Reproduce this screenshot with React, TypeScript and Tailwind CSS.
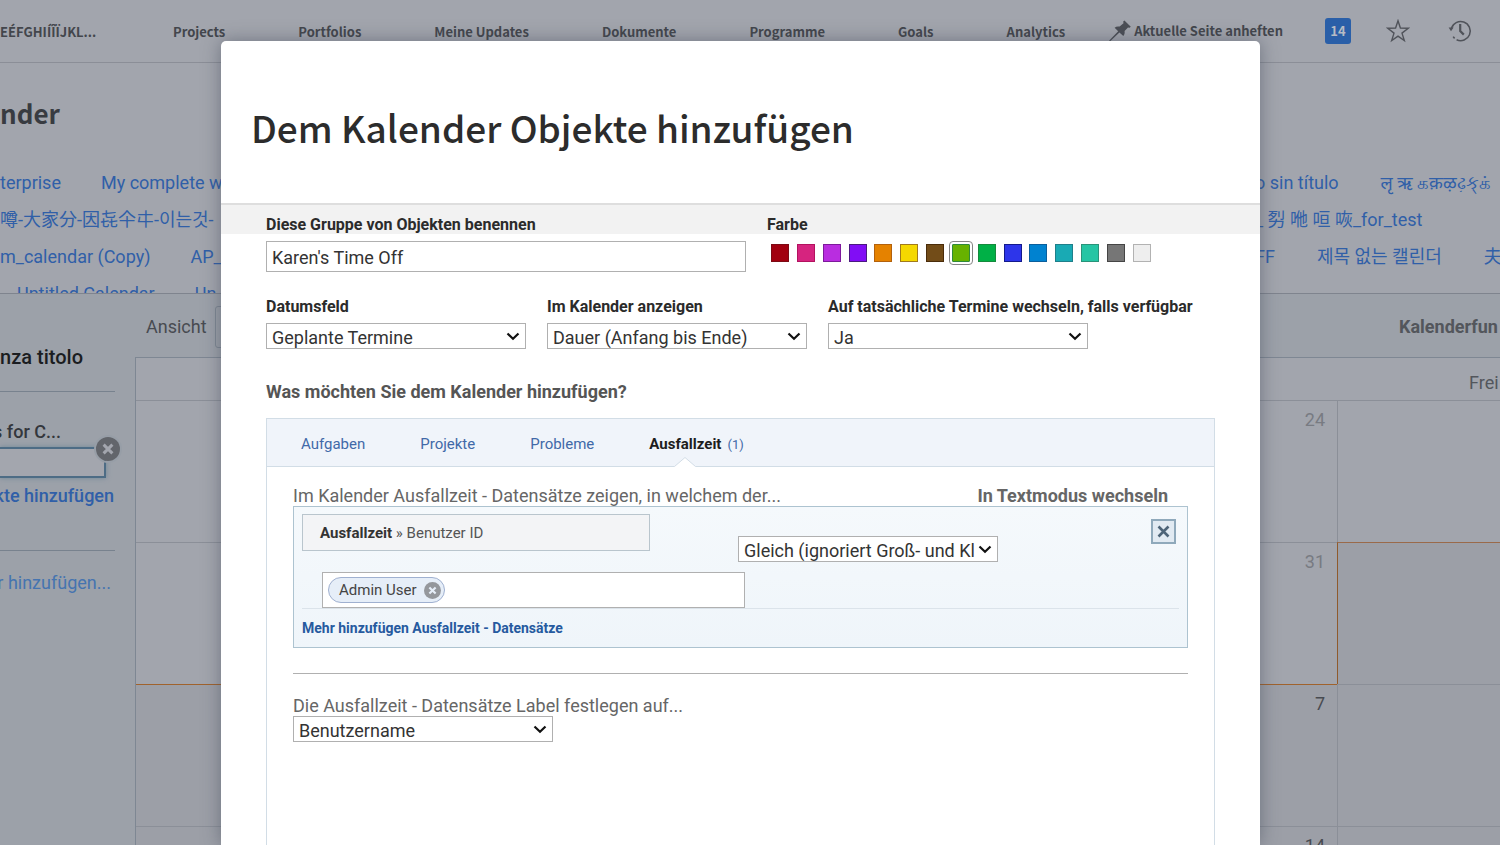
import React from "react";

const HEAD = "font-['Noto_Sans_CJK_JP','Noto_Sans',sans-serif]";

const navItems = [
  "Projects",
  "Portfolios",
  "Meine Updates",
  "Dokumente",
  "Programme",
  "Goals",
  "Analytics",
];

const calendarRows = [
  { left: ["terprise", "My complete w"], right: ["o sin título", "लृ ऋ கक़ऴઢ઼ક્க்"], pull: "" },
  { left: ["噂-大家分-因㐂仐㐄-이는것-"], right: ["_ 劽 咃 咺 咴_for_test"], pull: "" },
  { left: ["m_calendar (Copy)", "AP_"], right: ["FF", "제목 없는 캘린더", "夫"], pull: "" },
  { left: ["Untitled Calendar", "Un"], right: [], pull: "pl-[17px]" },
];

const swatches = [
  { name: "Rot", cls: "bg-[#a1000f] border-[#7c0a14]" },
  { name: "Pink", cls: "bg-[#d6247f] border-[#b3125f]" },
  { name: "Magenta", cls: "bg-[#b92de0] border-[#7d1a9b]" },
  { name: "Violett", cls: "bg-[#810df5] border-[#4b1a80]" },
  { name: "Orange", cls: "bg-[#e58200] border-[#b3610c]" },
  { name: "Gelb", cls: "bg-[#f5d800] border-[#a17a1c]" },
  { name: "Braun", cls: "bg-[#724c18] border-[#4a2c0a]" },
  { name: "Hellgrün", cls: "bg-[#67b200] border-[#2f8a3a]" },
  { name: "Grün", cls: "bg-[#00b046] border-[#158a3c]" },
  { name: "Blau", cls: "bg-[#2d35ea] border-[#141a8c]" },
  { name: "Azurblau", cls: "bg-[#0082d0] border-[#0b5f9c]" },
  { name: "Petrol", cls: "bg-[#19aab4] border-[#1f7f8a]" },
  { name: "Türkis", cls: "bg-[#25c5a4] border-[#2a9379]" },
  { name: "Grau", cls: "bg-[#767676] border-[#454545]" },
  { name: "Hellgrau", cls: "bg-[#eeeeee] border-[#b2b2b2]" },
];

function PinIcon() {
  return (
    <svg width="22" height="22" viewBox="0 0 22 22" fill="#4b4e55" aria-hidden="true">
      <path d="M15.4 0.4 L21.8 6.8 L20.6 7.8 L19 7.4 L15.6 11 C15.9 13 15.5 14.8 14.3 16 L10.4 12.4 L1.2 21.2 L0 21.6 L0.5 20.2 L9.2 11.2 L5.6 7.7 C7 6.6 8.6 6.2 10.6 6.6 L14.5 3.2 L14.2 1.5 Z" />
    </svg>
  );
}

function StarIcon() {
  return (
    <svg width="24" height="24" viewBox="0 0 24 24" fill="none" stroke="#50535a" strokeWidth="1.4" aria-hidden="true">
      <path d="M12 1.8 L14.4 9 L22.3 9.2 L16 14.1 L18.3 21.6 L12 17.1 L5.7 21.6 L8 14.1 L1.7 9.2 L9.6 9 Z" />
    </svg>
  );
}

function HistoryIcon() {
  return (
    <svg width="24" height="24" viewBox="0 0 24 24" fill="none" stroke="#50535a" strokeWidth="1.5" aria-hidden="true">
      <path d="M3.4 9.4 A9.6 9.6 0 1 1 8.6 20.8" />
      <path d="M5.2 17.6 A9.6 9.6 0 0 0 6.6 19.4" />
      <path d="M0.6 8.6 L5.6 8.6 L3 12.2 Z" fill="#50535a" stroke="none" />
      <path d="M12.2 5 V12 L15.8 15.6" strokeWidth="2.2" />
    </svg>
  );
}

function CircleX({ size, fill, stroke }: { size: number; fill: string; stroke: string }) {
  return (
    <svg width={size} height={size} viewBox="0 0 24 24" aria-hidden="true">
      <circle cx="12" cy="12" r="12" fill={fill} />
      <path d="M7.6 7.6 L16.4 16.4 M16.4 7.6 L7.6 16.4" stroke={stroke} strokeWidth="3" />
    </svg>
  );
}

function Select({ id, value, label }: { id: string; value: string; label?: string }) {
  return (
    <div className="relative w-[260px]">
      <select
        id={id}
        aria-label={label}
        defaultValue={value}
        className="block h-[26px] w-full appearance-none border border-[#b0b0b0] bg-white pt-[2px] pl-[5px] text-lg leading-6 font-normal text-[#333]"
      >
        <option>{value}</option>
      </select>
      <svg
        className="pointer-events-none absolute top-[9px] right-[6px]"
        width="14"
        height="9"
        viewBox="0 0 14 9"
        fill="none"
        stroke="#111"
        strokeWidth="2.2"
        aria-hidden="true"
      >
        <path d="M1.5 1.5 L7 6.8 L12.5 1.5" />
      </svg>
    </div>
  );
}

function TopNav() {
  return (
    <header className={`flex h-[63px] shrink-0 items-center border-b border-[#8b8e97] text-[13px] font-bold text-[#43464c] ${HEAD}`}>
      <div className="w-[173px] shrink-0 pt-[2px]">EÉFGHIÍÎÏJKL...</div>
      <nav className="flex gap-[73px] pt-[2px]">
        {navItems.map((n) => (
          <a key={n} href="#" className="whitespace-nowrap">
            {n}
          </a>
        ))}
      </nav>
      <div className="ml-auto flex items-center pr-[28px]">
        <button className="flex items-center gap-[3px] whitespace-nowrap">
          <PinIcon />
          Aktuelle Seite anheften
        </button>
        <button className="ml-[42px] size-[26px] rounded-[3px] bg-[#2a5fa8] text-center text-[#b7bbc4]">14</button>
        <button className="ml-[35px]" aria-label="Favoriten">
          <StarIcon />
        </button>
        <button className="ml-[38px]" aria-label="Verlauf">
          <HistoryIcon />
        </button>
      </div>
    </header>
  );
}

function CalendarNames() {
  return (
    <div className="h-[130px] shrink-0 overflow-hidden border-b border-[#7f848e] text-lg text-[#305fa8] font-[Roboto,'Noto_Sans_CJK_JP','Noto_Sans_CJK_KR','Noto_Sans',sans-serif]">
      {calendarRows.map((r, i) => (
        <div key={i} className="flex h-[37px] items-center justify-between whitespace-nowrap">
          <div className={`flex w-[221px] shrink-0 gap-10 overflow-hidden ${r.pull}`}>
            {r.left.map((t) => (
              <a key={t} href="#">
                {t}
              </a>
            ))}
          </div>
          <div className="flex w-[245px] shrink-0 gap-[42px] overflow-hidden">
            {r.right.map((t) => (
              <a key={t} href="#" className="shrink-0">
                {t}
              </a>
            ))}
          </div>
        </div>
      ))}
    </div>
  );
}

function Sidebar() {
  return (
    <aside className="w-[135px] shrink-0 overflow-hidden pr-[20px] text-lg leading-6 whitespace-nowrap">
      <h2 className="flex justify-end pt-[51px] pr-8 text-xl leading-6 font-medium text-[#1b1d21]">nza titolo</h2>
      <hr className="mt-[22px] border-[#78828e]" />
      <div className="mt-7 flex justify-end pr-[54px] font-medium text-[#33363c]">s for C...</div>
      <div className="relative mt-[3px] mr-[9px]">
        <input
          aria-label="Kalendername"
          className="block h-[31px] w-full border-2 border-l-0 border-[#4d6c85] bg-[#a3a6ae] shadow-[0_0_5px_#6f8798]"
        />
        <button aria-label="Abbrechen" className="absolute -top-3 -right-4 rounded-full border-2 border-[#979ea7]">
          <CircleX size={24} fill="#62656b" stroke="#a3a6ae" />
        </button>
      </div>
      <a href="#" className="mt-[6px] flex justify-end pr-px font-medium text-[#305fa8]">
        kte hinzufügen
      </a>
      <hr className="mt-[42px] border-[#78828e]" />
      <a href="#" className="mt-[20px] flex justify-end pr-1 text-[#4574b0]">
        r hinzufügen...
      </a>
    </aside>
  );
}

function CalendarGrid() {
  return (
    <table className="w-full table-fixed border-separate border-spacing-0 border-l border-[#7e8793] text-lg leading-6">
      <thead>
        <tr className="h-[43px] bg-[#a2a5ad]">
          <th className="border-t border-[#7e8793]" />
          <th className="w-[163px] overflow-hidden border-t border-[#7e8793] pt-2 pl-[132px] text-left font-normal whitespace-nowrap text-[#53565c]">
            Frei
          </th>
        </tr>
      </thead>
      <tbody className="align-top text-right text-[#787b82]">
        <tr className="h-[142px] bg-[#a2a5ad]">
          <td className="border-t border-t-[#8b8f98] pt-[7px] pr-3">24</td>
          <td className="border-t border-l border-t-[#8b8f98] border-l-[#8b8f98]" />
        </tr>
        <tr className="h-[142px] bg-[#a2a5ad]">
          <td className="border-t border-t-[#8b8f98] pt-[7px] pr-3">31</td>
          <td className="border-t border-l border-t-[#9a6a4a] border-l-[#8f5a2c] bg-[#9c9fa7]" />
        </tr>
        <tr className="h-[142px] bg-[#9c9fa7]">
          <td className="border-t border-t-[#a0622c] pt-[7px] pr-3 text-[#484b51]">7</td>
          <td className="border-t border-l border-t-[#8b8f98] border-l-[#8b8f98]" />
        </tr>
        <tr className="h-[142px] bg-[#9c9fa7]">
          <td className="border-t border-t-[#8b8f98] pt-[7px] pr-3 text-[#484b51]">14</td>
          <td className="border-t border-l border-t-[#8b8f98] border-l-[#8b8f98]" />
        </tr>
      </tbody>
    </table>
  );
}

function Backdrop() {
  return (
    <div className="flex h-full flex-col bg-[#a2a5ad]">
      <TopNav />
      <h1 className={`h-[101px] shrink-0 pt-[29px] text-[26px] leading-[42px] font-bold text-[#383b41] ${HEAD}`}>nder</h1>
      <CalendarNames />
      <div className="flex min-h-0 flex-1 bg-[#9ca1a9]">
        <Sidebar />
        <div className="flex-1">
          <div className="flex h-[63px] items-center justify-between overflow-hidden pt-[2px] text-lg whitespace-nowrap">
            <label className="flex items-center gap-2 pl-[11px] text-[#484b51]">
              Ansicht
              <select className="h-[42px] w-24 rounded-[3px] border border-[#7e8793] bg-transparent" />
            </label>
            <div className="w-[101px] overflow-hidden font-bold text-[#53565c]">Kalenderfun</div>
          </div>
          <CalendarGrid />
        </div>
      </div>
    </div>
  );
}

function FilterPanel() {
  return (
    <div className="flex flex-col border border-[#adc3d0] bg-linear-to-b from-[#f5f9fc] to-[#eff5fa] px-2 pb-2">
      <div className="flex justify-between pt-[7px]">
        <div className="h-[37px] w-[348px] border border-[#b9c5cd] bg-[#f3f4f6] pl-[17px] text-[15px] leading-9 text-[#555]">
          <b className="text-[#333]">Ausfallzeit</b> » Benutzer ID
        </div>
        <div className="flex gap-[153px] pr-[3px]">
          <div className="pt-[22px]">
            <Select id="op" label="Operator" value="Gleich (ignoriert Groß- und Kl" />
          </div>
          <button
            aria-label="Regel entfernen"
            className="mt-[5px] flex size-[25px] items-center justify-center border-2 border-[#8fa9bb] bg-[#e1eaf2]"
          >
            <svg width="13" height="13" viewBox="0 0 13 13" stroke="#4d6478" strokeWidth="2.6" aria-hidden="true">
              <path d="M1.5 1.5 L11.5 11.5 M11.5 1.5 L1.5 11.5" />
            </svg>
          </button>
        </div>
      </div>
      <div className="mt-[10px] border-b border-[#dbe3ea] pl-5">
        <div className="flex h-9 w-[423px] items-center border border-[#b0b0b0] bg-white pl-[5px]">
          <span className="flex h-[26px] items-center gap-[7px] rounded-full border border-[#9fb0d0] bg-[#e6eef8] pr-[3px] pl-[10px] text-[15px] text-[#444]">
            Admin User
            <button aria-label="Admin User entfernen">
              <CircleX size={17} fill="#94979c" stroke="#e6eef8" />
            </button>
          </span>
        </div>
      </div>
      <a href="#" className="mt-[9px] mb-px text-[14px] leading-5 font-bold text-[#265a9f]">
        Mehr hinzufügen Ausfallzeit - Datensätze
      </a>
    </div>
  );
}

function Dialog() {
  return (
    <section
      role="dialog"
      aria-labelledby="title"
      className="flex w-full flex-col overflow-hidden rounded-t-[5px] bg-white shadow-[0_0_18px_rgba(60,68,84,0.5)]"
    >
      <div className="h-[164px] shrink-0 border-b-2 border-[#dedede] pt-14 pl-[30px]">
        <h2 id="title" className={`text-[37px] leading-[60px] font-medium text-[#2c2c2c] ${HEAD}`}>
          Dem Kalender Objekte hinzufügen
        </h2>
      </div>
      <div className="flex h-[29px] shrink-0 bg-[#f2f2f2] pt-[10px] pl-[45px] text-base leading-5 font-bold text-[#2b2b2b]">
        <label htmlFor="group" className="w-[501px]">
          Diese Gruppe von Objekten benennen
        </label>
        <span id="color">Farbe</span>
      </div>
      <div className="flex min-h-0 flex-1 flex-col px-[45px] pt-[7px]">
        <div className="flex shrink-0">
          <input
            id="group"
            defaultValue="Karen's Time Off"
            className="h-[31px] w-[480px] border border-[#b0b0b0] bg-white px-[5px] pt-[2px] text-lg text-[#333]"
          />
          <div role="radiogroup" aria-labelledby="color" className="ml-[25px] flex w-[380px] justify-between pt-[3px]">
            {swatches.map((s, i) => (
              <input
                key={s.name}
                type="radio"
                name="color"
                aria-label={s.name}
                defaultChecked={i === 7}
                className={`size-[18px] appearance-none border checked:rounded-[1px] checked:outline checked:outline-offset-2 checked:outline-[#858585] ${s.cls}`}
              />
            ))}
          </div>
        </div>
        <div className="mt-[25px] flex shrink-0 gap-[21px] text-base leading-5 font-bold whitespace-nowrap text-[#2b2b2b]">
          {[
            ["Datumsfeld", "Geplante Termine", "f1"],
            ["Im Kalender anzeigen", "Dauer (Anfang bis Ende)", "f2"],
            ["Auf tatsächliche Termine wechseln, falls verfügbar", "Ja", "f3"],
          ].map(([l, v, id]) => (
            <div key={id} className="flex w-[260px] flex-col gap-[6px]">
              <label htmlFor={id}>{l}</label>
              <Select id={id} value={v} />
            </div>
          ))}
        </div>
        <h3 className="mt-[31px] shrink-0 text-lg leading-6 font-bold text-[#555]">Was möchten Sie dem Kalender hinzufügen?</h3>
        <div className="mt-[14px] flex min-h-0 flex-1 flex-col border border-b-0 border-[#d2dde6]">
          <div role="tablist" className="flex h-12 shrink-0 gap-[55px] border-b border-[#d2dde6] bg-[#f0f4fa] px-[34px] pt-1 text-[15px] text-[#4169a8]">
            <button role="tab">Aufgaben</button>
            <button role="tab">Projekte</button>
            <button role="tab">Probleme</button>
            <button role="tab" aria-selected="true" className="relative">
              <b className="text-[#1d1d1d]">Ausfallzeit</b>
              <span className="pl-[6px] text-[13px]">(1)</span>
              <svg className="absolute -bottom-px left-[25px]" width="22" height="10" viewBox="0 0 22 10" aria-hidden="true">
                <path d="M0.5 9.5 L11 0.5 L21.5 9.5 V10 H0.5 Z" fill="#fff" />
                <path d="M0.5 9.5 L11 0.5 L21.5 9.5" fill="none" stroke="#d2dde6" />
              </svg>
            </button>
          </div>
          <div className="px-[26px] pt-[17px] text-lg leading-6 text-[#666]">
            <div className="flex h-[22px] justify-between pr-5">
              <span>Im Kalender Ausfallzeit - Datensätze zeigen, in welchem der...</span>
              <button className="flex font-bold">In Textmodus wechseln</button>
            </div>
            <FilterPanel />
            <hr className="mt-[25px] mb-[22px] border-[#b0b0b0]" />
            <label htmlFor="labelfield" className="block leading-5">
              Die Ausfallzeit - Datensätze Label festlegen auf...
            </label>
            <Select id="labelfield" value="Benutzername" />
          </div>
        </div>
      </div>
    </section>
  );
}

export default function App() {
  return (
    <main className="relative h-screen overflow-hidden font-[Roboto,sans-serif]">
      <Backdrop />
      <div className="absolute inset-0 flex pt-[41px] pr-60 pl-[221px]">
        <Dialog />
      </div>
    </main>
  );
}
